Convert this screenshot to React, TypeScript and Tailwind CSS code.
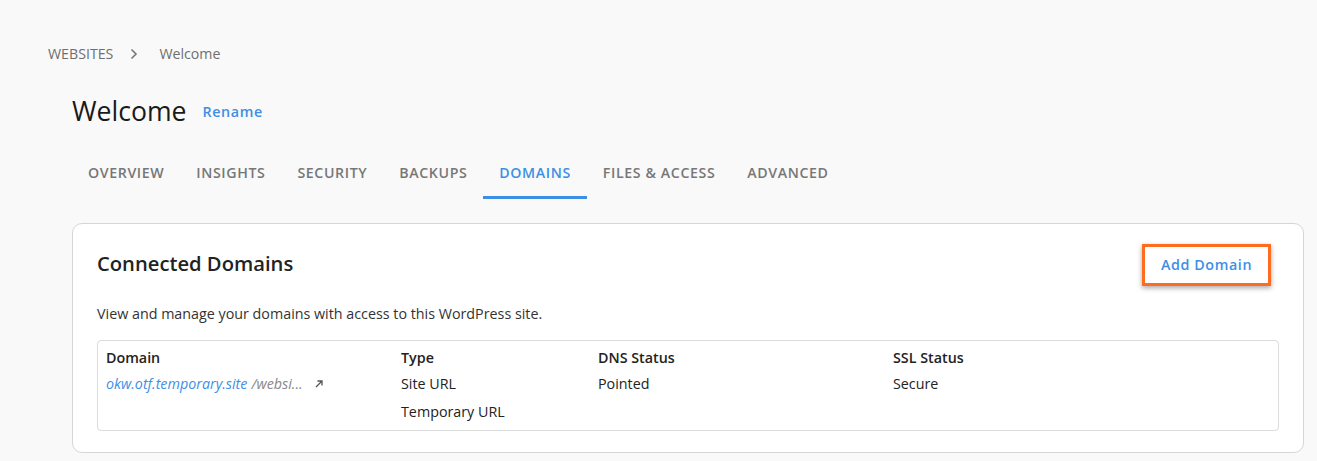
import React from "react";

export default function App() {
  const tabs = ["OVERVIEW", "INSIGHTS", "SECURITY", "BACKUPS", "DOMAINS", "FILES & ACCESS", "ADVANCED"];
  return (
    <div
      className="w-[1317px] h-[461px] bg-[#f9f9f9] overflow-hidden text-[#222]"
      style={{ fontFamily: '"Open Sans", "Noto Sans", sans-serif' }}
    >
      <div className="pl-[48px] pt-[44px] flex items-center text-[14.2px] text-[#6f6f6f] h-[20px] box-content">
        <span>WEBSITES</span>
        <svg className="ml-[16px] mr-[20px]" width="10" height="12" viewBox="0 0 10 12" fill="none">
          <path d="M2.5 1.5 L7 6 L2.5 10.5" stroke="#777" strokeWidth="1.6" />
        </svg>
        <span>Welcome</span>
      </div>
      <div className="pl-[72px] pr-[14px]">
        <div className="flex items-center mt-[29px] h-[36px]">
          <h1 className="text-[26.6px] leading-[36px] text-[#1a1a1a]">Welcome</h1>
          <button className="ml-[16px] mt-[2px] text-[14.3px] font-semibold text-[#3d8fe6] tracking-[0.6px]">Rename</button>
        </div>
        <div className="flex mt-[26px] h-[44px]">
          {tabs.map((t) => (
            <div
              key={t}
              className={
                "px-[16px] pt-[7px] text-[14.2px] font-semibold tracking-[0.6px] border-b-[3px] " +
                (t === "DOMAINS" ? "text-[#3d8fe6] border-[#3d8fe6]" : "text-[#777] border-transparent")
              }
            >
              {t}
            </div>
          ))}
        </div>
        <div className="mt-[24px] w-[1232px] h-[230px] bg-white border border-[#d6d6d6] rounded-[10px] px-[24px]">
          <div className="flex items-center justify-between pt-[10px] h-[62px] box-content">
            <h2 className="text-[20.2px] font-semibold text-[#222] mb-[4px]">Connected Domains</h2>
            <button className="mr-[8px] border-[3px] border-[#ff6b1f] shadow-[0_2px_5px_rgba(0,0,0,0.35)] h-[42px] w-[129px] text-[14.3px] font-semibold text-[#3d8fe6] tracking-[0.6px]">
              Add Domain
            </button>
          </div>
          <p className="text-[14.3px] text-[#333] mt-[8px] leading-[20px]">
            View and manage your domains with access to this WordPress site.
          </p>
          <div className="mt-[16px] border border-[#dcdcdc] rounded-[4px] h-[91px] px-[8px] pt-[3px] text-[14.3px] leading-[28px]">
            <div className="flex">
              <div className="w-[295px]">
                <div className="font-semibold text-[#222] h-[26px]">Domain</div>
                <div className="flex items-center">
                  <span className="italic text-[#3d8fe6]">okw.otf.temporary.site</span>
                  <span className="italic text-[#888] ml-[4px]">/websi...</span>
                  <svg className="ml-[11px]" width="10" height="10" viewBox="0 0 10 10" fill="none">
                    <path d="M2 8 L8 2 M3.5 2 H8 V6.5" stroke="#555" strokeWidth="1.3" />
                  </svg>
                </div>
              </div>
              <div className="w-[197px]">
                <div className="font-semibold text-[#222] h-[26px]">Type</div>
                <div>Site URL</div>
                <div>Temporary URL</div>
              </div>
              <div className="w-[295px]">
                <div className="font-semibold text-[#222] h-[26px]">DNS Status</div>
                <div>Pointed</div>
              </div>
              <div className="flex-1">
                <div className="font-semibold text-[#222] h-[26px]">SSL Status</div>
                <div>Secure</div>
              </div>
            </div>
          </div>
        </div>
      </div>
    </div>
  );
}
